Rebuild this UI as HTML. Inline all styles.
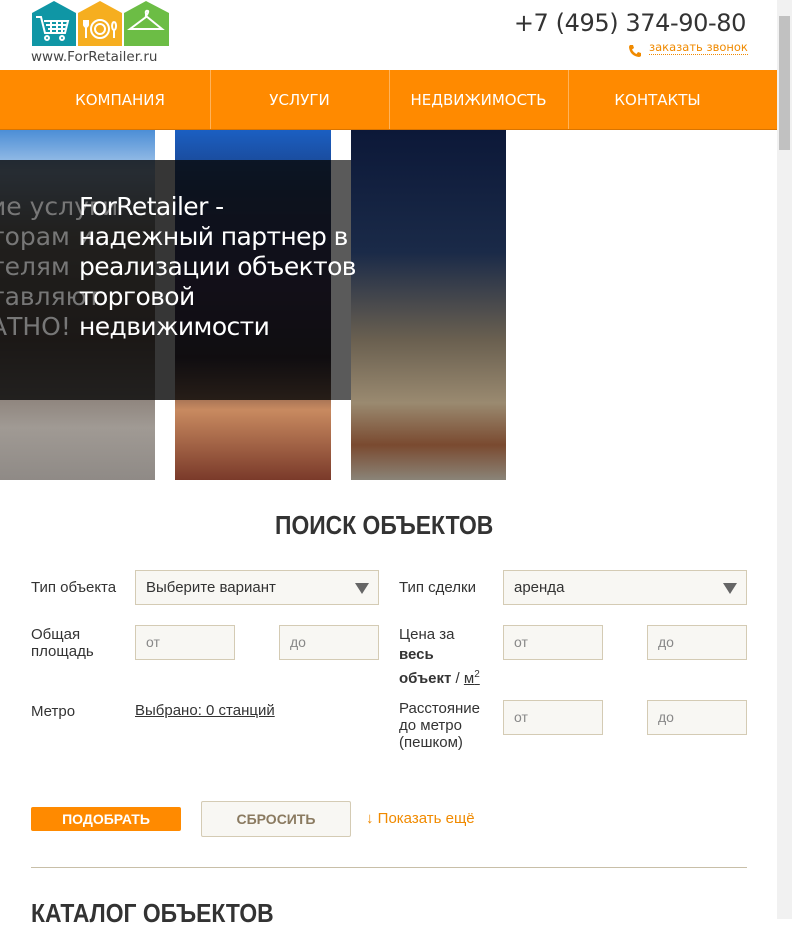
<!DOCTYPE html>
<html><head><meta charset="utf-8"><style>
*{box-sizing:border-box;margin:0;padding:0}
body{width:792px;height:919px;overflow:hidden;background:#fff;font-family:"Liberation Sans",sans-serif;color:#333;position:relative}
.a{position:absolute}
.nav{left:0;top:70px;width:777px;height:60px;background:#ff8a00;border-bottom:1px solid #d97400}
.nav div{position:absolute;top:0;height:59px;line-height:60px;color:#fff;font-family:"DejaVu Sans","Liberation Sans",sans-serif;font-size:15px;text-align:center}
.sep{position:absolute;top:0;width:1px;height:59px;background:#ffb35a}
.lbl{font-size:15px;color:#333;line-height:19px}
.box{background:#f8f7f3;border:1px solid #d4cbb4;height:35px;font-size:14px;color:#888;padding-left:10px;line-height:33px}
.sel{color:#333;font-size:15px}
.tri{position:absolute;right:9px;top:12px;width:0;height:0;border-left:7px solid transparent;border-right:7px solid transparent;border-top:11px solid #666}
.h{font-weight:bold;font-size:26px;color:#333;transform-origin:0 0;transform:scaleX(0.88);white-space:nowrap}
</style></head><body>
<svg class="a" style="left:31px;top:0" width="140" height="48" viewBox="0 0 140 48">
<polygon points="1,13 23,1 45,13 45,46 1,46" fill="#0f96a5"/>
<polygon points="47,13 69,1 91,13 91,46 47,46" fill="#f6ae1f"/>
<polygon points="93,13 115,1 138,13 138,46 93,46" fill="#6cbd45"/>
<g stroke="#fff" stroke-width="2" fill="none"><path d="M5,17h5l4,16h20l3,-12h-24M15,25h20M17,29h17M20,21v11M26,21v11M31,21v11"/><circle cx="16" cy="38" r="2"/><circle cx="31" cy="38" r="2"/>
<circle cx="69" cy="29" r="9"/><circle cx="69" cy="29" r="5"/><path d="M55,20v8M53,20v5q2,4 4,0v-5M55,28v10M83,22a2,4 0 1 0 0.1,0M83,30v8"/>
<path d="M115,16q3,-4 2,-5q-3,-1 -2,3v3l-16,12h32z"/></g>
</svg>
<div class="a" style="left:31px;top:49px;font-family:'DejaVu Sans',sans-serif;font-size:13.5px;color:#444">www.ForRetailer.ru</div>
<div class="a" style="right:46px;top:9px;font-family:'DejaVu Sans',sans-serif;font-size:24px;color:#333;letter-spacing:-0.4px">+7 (495) 374-90-80</div>
<svg class="a" style="left:628px;top:44px" width="14" height="14" viewBox="0 0 14 14"><path d="M2,1l3,0l1,3l-2,1.5q1.5,3 4.5,4.5l1.5,-2l3,1l0,3q-1,1 -2,1q-9,-1 -10,-10q0,-1 1,-2z" fill="#f08a00"/></svg>
<div class="a" style="left:649px;top:41px;font-family:'DejaVu Sans',sans-serif;font-size:11.5px;color:#f08a00;border-bottom:1px dotted #f08a00;line-height:13px">заказать звонок</div>
<div class="a nav">
<div style="left:30px;width:180px">КОМПАНИЯ</div><span class="sep" style="left:210px"></span>
<div style="left:210px;width:179px">УСЛУГИ</div><span class="sep" style="left:389px"></span>
<div style="left:389px;width:179px">НЕДВИЖИМОСТЬ</div><span class="sep" style="left:568px"></span>
<div style="left:568px;width:179px">КОНТАКТЫ</div>
</div>
<div class="a" style="left:777px;top:0;width:15px;height:919px;background:#f1f1f1"></div>
<div class="a" style="left:779px;top:16px;width:11px;height:134px;background:#c1c1c1"></div>
<div class="a" style="left:0;top:130px;width:155px;height:350px;background:linear-gradient(#4c8ed6 0,#a9c8ea 12%,#8a8378 30%,#6c5a50 60%,#a09a94 85%,#8f8a86 100%)"></div>
<div class="a" style="left:175px;top:130px;width:156px;height:350px;background:linear-gradient(#1b5fc2 0,#1a3a7a 18%,#3a2a5a 45%,#2c2030 65%,#c88a60 80%,#7a3a2a 100%)"></div>
<div class="a" style="left:351px;top:130px;width:155px;height:350px;background:linear-gradient(#0c1838 0,#1a2a48 35%,#6a6050 60%,#9a8a70 78%,#7a4a30 90%,#8a8478 100%)"></div>
<div class="a" style="left:0;top:160px;width:351px;height:240px;background:rgba(10,10,10,.82)"></div>
<div class="a" style="left:331px;top:160px;width:20px;height:240px;background:#5a5a5a"></div>
<div class="a" style="left:-10px;top:192px;font-family:'DejaVu Sans',sans-serif;font-size:25px;line-height:30px;color:#777;white-space:nowrap">ие услуги<br>торам и<br>телям<br>тавляют<br>АТНО!</div>
<div class="a" style="left:79px;top:192px;font-family:'DejaVu Sans',sans-serif;font-size:25px;line-height:30px;color:#fff;white-space:nowrap;letter-spacing:-0.6px">ForRetailer -<br>надежный партнер в<br>реализации объектов<br>торговой<br>недвижимости</div>
<div class="a h" style="left:275px;top:510px">ПОИСК ОБЪЕКТОВ</div>
<div class="a lbl" style="left:31px;top:578px">Тип объекта</div>
<div class="a box sel" style="left:135px;top:570px;width:244px">Выберите вариант<span class="tri"></span></div>
<div class="a lbl" style="left:399px;top:578px">Тип сделки</div>
<div class="a box sel" style="left:503px;top:570px;width:244px">аренда<span class="tri"></span></div>
<div class="a lbl" style="left:31px;top:626px;line-height:17px">Общая<br>площадь</div>
<div class="a box" style="left:135px;top:625px;width:100px">от</div>
<div class="a box" style="left:279px;top:625px;width:100px">до</div>
<div class="a lbl" style="left:399px;top:625px;line-height:20px">Цена за<br><b>весь</b><br><b>объект</b> / <u>м<sup style="font-size:10px">2</sup></u></div>
<div class="a box" style="left:503px;top:625px;width:100px">от</div>
<div class="a box" style="left:647px;top:625px;width:100px">до</div>
<div class="a lbl" style="left:31px;top:702px">Метро</div>
<div class="a lbl" style="left:135px;top:701px;text-decoration:underline">Выбрано: 0 станций</div>
<div class="a lbl" style="left:399px;top:700px;line-height:17px">Расстояние<br>до метро<br>(пешком)</div>
<div class="a box" style="left:503px;top:700px;width:100px">от</div>
<div class="a box" style="left:647px;top:700px;width:100px">до</div>
<div class="a" style="left:31px;top:807px;width:150px;height:24px;background:#ff8a00;border-radius:2px;color:#fff;font-weight:bold;font-size:14px;text-align:center;line-height:24px">ПОДОБРАТЬ</div>
<div class="a" style="left:201px;top:801px;width:150px;height:36px;background:#f8f7f3;border:1px solid #d4cbb4;border-radius:2px;color:#8a7a60;font-weight:bold;font-size:14px;text-align:center;line-height:34px">СБРОСИТЬ</div>
<div class="a" style="left:366px;top:810px;color:#f08a00;font-size:15px">&#x2193; Показать ещё</div>
<div class="a" style="left:31px;top:867px;width:716px;height:1px;background:#c8bfa8"></div>
<div class="a h" style="left:31px;top:898px">КАТАЛОГ ОБЪЕКТОВ</div>
</body></html>
